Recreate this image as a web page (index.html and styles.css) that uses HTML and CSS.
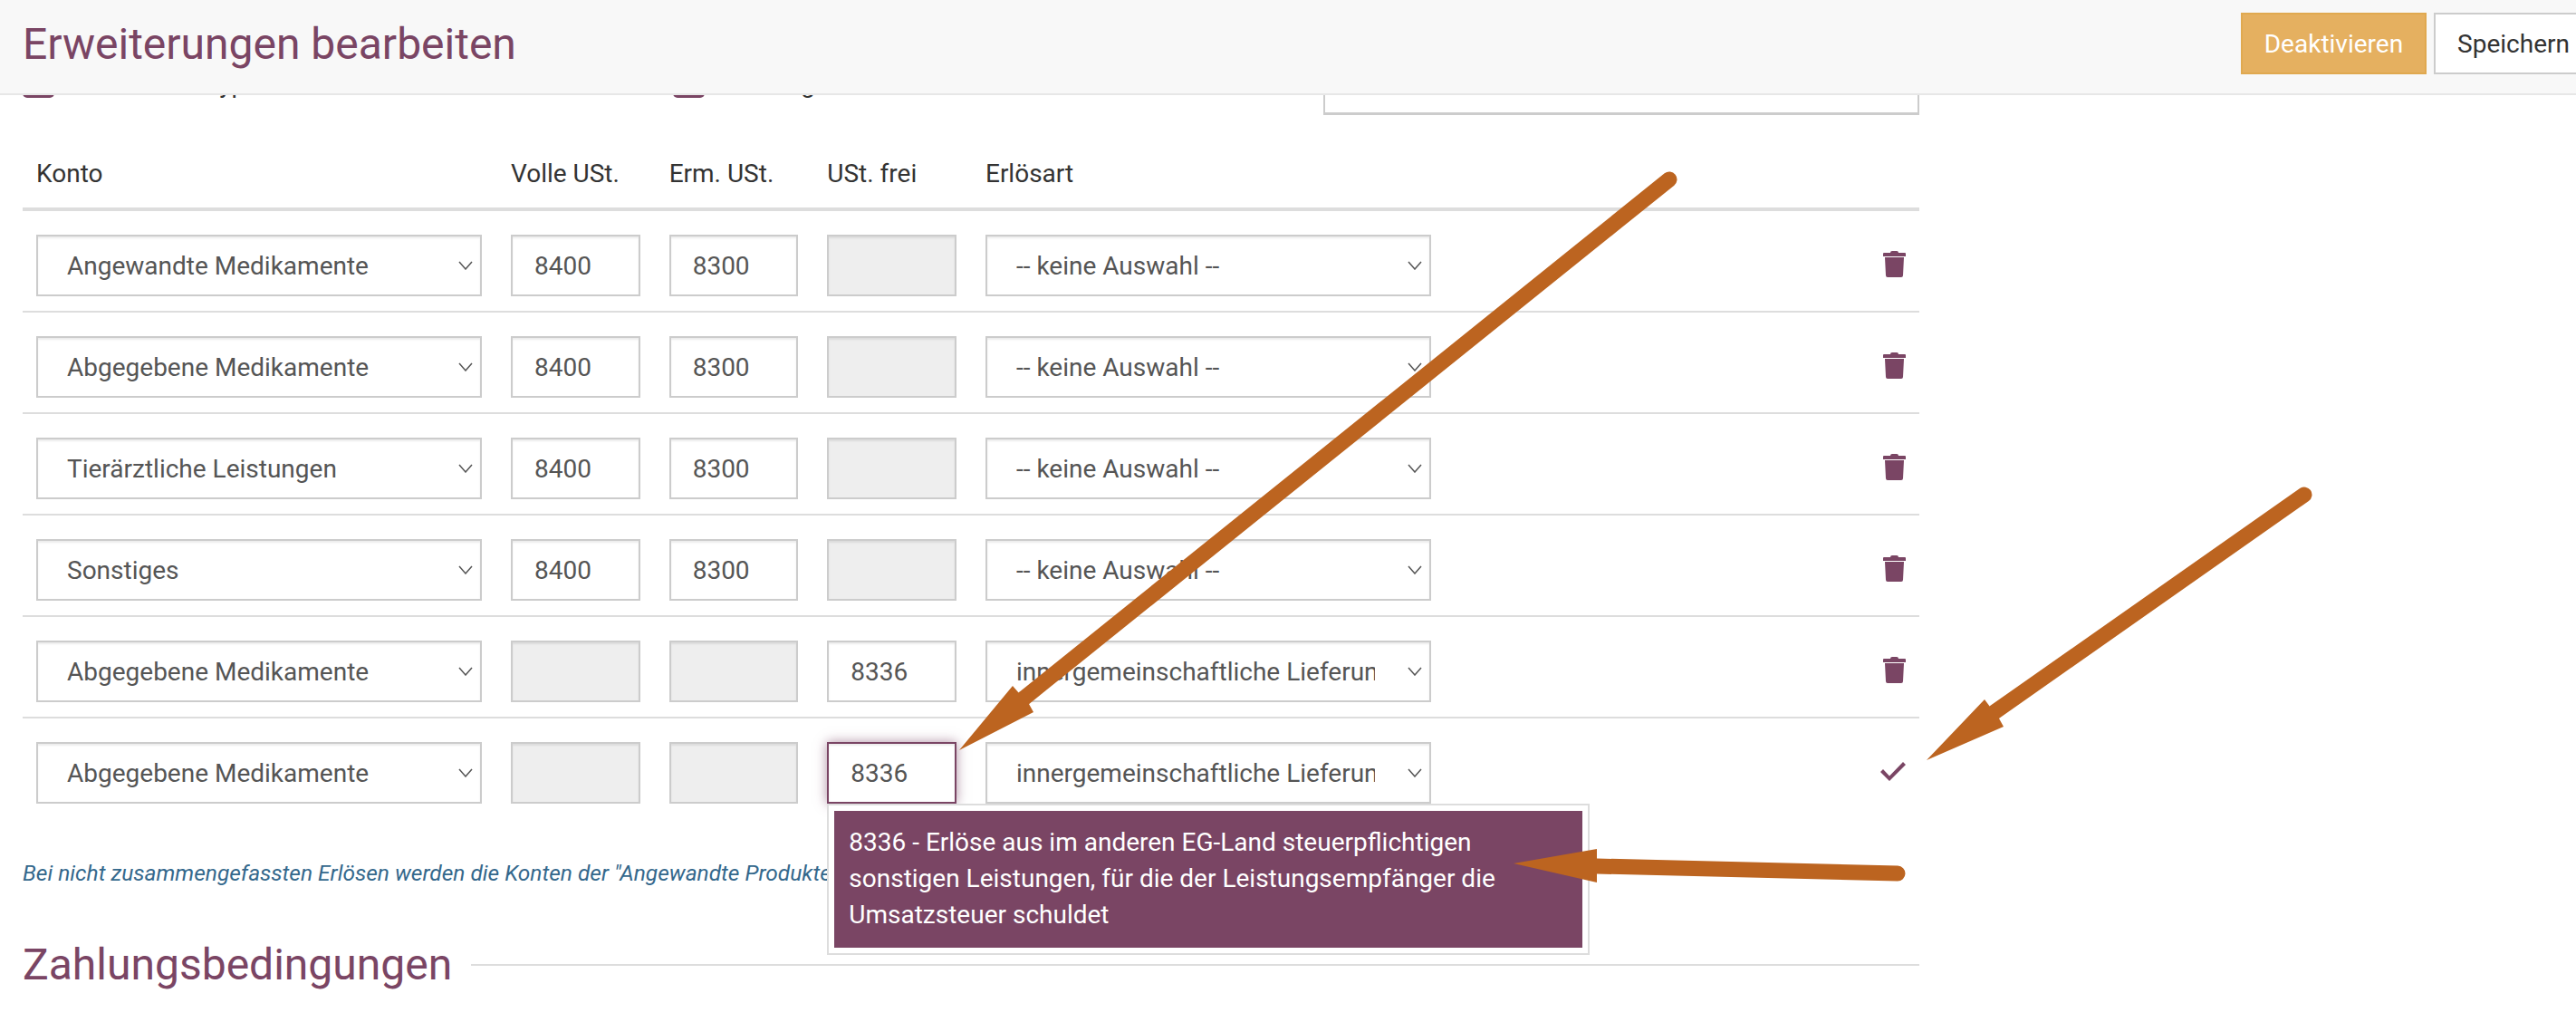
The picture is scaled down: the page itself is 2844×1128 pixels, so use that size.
FILE: index.html
```html
<!DOCTYPE html>
<html lang="de">
<head>
    <meta charset="UTF-8">
    <title>Erweiterungen bearbeiten</title>
    <link rel="stylesheet" href="styles.css">
</head>
<body>
<header class="topbar">
    <h1 class="page-title">Erweiterungen bearbeiten</h1>
    <div class="actions">
        <button class="btn btn-warning" type="button">Deaktivieren</button>
        <button class="btn" type="button">Speichern</button>
    </div>
</header>

<!-- what is left of the form after scrolling under the header -->
<div class="scrolled-off">
    <label class="check check-first"><span class="check-box"></span>Erlöse nach Typ</label>
    <label class="check check-second"><span class="check-box"></span>Leistung</label>
    <div class="scrolled-box"></div>
</div>

<main class="content">
    <div class="account-row account-head">
        <div>Konto</div>
        <div>Volle USt.</div>
        <div>Erm. USt.</div>
        <div>USt. frei</div>
        <div>Erlösart</div>
    </div>

    <div class="account-row">
        <select class="field"><option>Angewandte Medikamente</option></select>
        <input class="field" type="text" value="8400">
        <input class="field" type="text" value="8300">
        <input class="field" type="text" disabled>
        <select class="field"><option>-- keine Auswahl --</option></select>
        <svg class="row-icon" viewBox="0 0 25 29"><use href="#icon-trash"></use></svg>
    </div>
    <div class="account-row">
        <select class="field"><option>Abgegebene Medikamente</option></select>
        <input class="field" type="text" value="8400">
        <input class="field" type="text" value="8300">
        <input class="field" type="text" disabled>
        <select class="field"><option>-- keine Auswahl --</option></select>
        <svg class="row-icon" viewBox="0 0 25 29"><use href="#icon-trash"></use></svg>
    </div>
    <div class="account-row">
        <select class="field"><option>Tierärztliche Leistungen</option></select>
        <input class="field" type="text" value="8400">
        <input class="field" type="text" value="8300">
        <input class="field" type="text" disabled>
        <select class="field"><option>-- keine Auswahl --</option></select>
        <svg class="row-icon" viewBox="0 0 25 29"><use href="#icon-trash"></use></svg>
    </div>
    <div class="account-row">
        <select class="field"><option>Sonstiges</option></select>
        <input class="field" type="text" value="8400">
        <input class="field" type="text" value="8300">
        <input class="field" type="text" disabled>
        <select class="field"><option>-- keine Auswahl --</option></select>
        <svg class="row-icon" viewBox="0 0 25 29"><use href="#icon-trash"></use></svg>
    </div>
    <div class="account-row">
        <select class="field"><option>Abgegebene Medikamente</option></select>
        <input class="field" type="text" disabled>
        <input class="field" type="text" disabled>
        <input class="field" type="text" value="8336">
        <select class="field"><option>innergemeinschaftliche Lieferung</option></select>
        <svg class="row-icon" viewBox="0 0 25 29"><use href="#icon-trash"></use></svg>
    </div>
    <div class="account-row account-row-last">
        <select class="field"><option>Abgegebene Medikamente</option></select>
        <input class="field" type="text" disabled>
        <input class="field" type="text" disabled>
        <div class="tip-anchor">
            <input class="field field-focus" type="text" value="8336">
            <div class="tip">
                <div class="tip-inner">8336 - Erlöse aus im anderen EG-Land steuerpflichtigen sonstigen Leistungen, für die der Leistungsempfänger die Umsatzsteuer schuldet</div>
            </div>
        </div>
        <select class="field"><option>innergemeinschaftliche Lieferung</option></select>
        <svg class="row-icon row-icon-check" viewBox="0 0 28 21">
            <path d="M0 11 L3 8 L10 15.5 L25 0 L28 3 L10 21 Z"></path>
        </svg>
    </div>

    <p class="note">Bei nicht zusammengefassten Erlösen werden die Konten der "Angewandte Produkte" verwendet.</p>

    <h2 class="section-title">Zahlungsbedingungen</h2>
</main>

<!-- annotation arrows drawn over the screenshot -->
<svg class="arrows" viewBox="0 0 2844 1128">
    <path class="arrow-line" d="M1843 198 L1130 771"></path>
    <polygon class="arrow-head" points="1059,828 1118,757 1125,765 1136,777 1141,786"></polygon>
    <path class="arrow-line" d="M2544 546 L2202 786"></path>
    <polygon class="arrow-head" points="2127,839 2191,772 2197,780 2207,793 2212,802"></polygon>
    <path class="arrow-line" d="M2095 964 L1763 956"></path>
    <polygon class="arrow-head" points="1671,953 1763,937 1763,974"></polygon>
</svg>

<svg class="icon-defs" width="0" height="0">
    <symbol id="icon-trash" viewBox="0 0 25 29">
        <path d="M8 2 Q8 0 10 0 H15 Q17 0 17 2 H24 Q25 2 25 3 V6 H0 V3 Q0 2 1 2 Z"></path>
        <path d="M2 7 H23 L22 27 Q22 29 20 29 H5 Q3 29 3 27 Z"></path>
    </symbol>
</svg>
</body>
</html>
```

FILE: styles.css
```css
body {
    margin: 0;
    background-color: #fff;
    color: #333;
    font-family: Roboto, Arial, sans-serif;
    font-size: 28px;
    overflow: hidden;
    position: relative;
    height: 1128px;
}

/* top bar */
.topbar {
    display: flex;
    align-items: center;
    justify-content: space-between;
    height: 96px;
    padding: 0 0 7px 25px;
    background-color: #f8f8f8;
    border-bottom: 2px solid #e7e7e7;
    overflow: hidden;
}
.page-title {
    margin: 0;
    color: #7a4564;
    font-size: 48px;
    font-weight: 400;
}
.actions {
    display: flex;
    gap: 8px;
    margin-right: -19px;
}
.btn {
    height: 68px;
    padding: 0 24px;
    background-color: #fff;
    border: 2px solid #ccc;
    color: #333;
    font-family: inherit;
    font-size: 28px;
}
.btn-warning {
    background-color: #e5b060;
    border-color: #e0a950;
    color: #fff;
}

/* clipped form remains */
.scrolled-off {
    display: flex;
    align-items: flex-end;
    height: 22px;
    padding-left: 25px;
    overflow: hidden;
}
.check {
    display: flex;
    align-items: flex-end;
    gap: 15px;
    margin-bottom: 19px;
    line-height: 30px;
    color: #333;
    flex-shrink: 0;
}
.check-first {
    width: 718px;
}
.check-second {
    width: 718px;
}
.check-box {
    width: 35px;
    height: 35px;
    background-color: #7a4564;
    border-radius: 5px;
}
.scrolled-box {
    width: 654px;
    height: 60px;
    background-color: #fff;
    border: 2px solid #ccc;
    border-bottom-width: 3px;
    flex-shrink: 0;
}

/* account table */
.content {
    width: 2094px;
    margin-left: 25px;
}
.account-row {
    display: grid;
    grid-template-columns: 492px 142.67px 142.67px 142.67px 492px 1fr;
    column-gap: 32px;
    align-items: center;
    padding: 26px 15px 16px;
    border-bottom: 2px solid #ddd;
}
.account-head {
    height: 106px;
    box-sizing: border-box;
    padding: 50px 15px 0;
    align-items: start;
    border-bottom-width: 4px;
    line-height: 30px;
}
.account-row-last {
    border-bottom-color: transparent;
}
.field {
    display: block;
    width: 100%;
    height: 68px;
    box-sizing: border-box;
    padding: 0 24px;
    background-color: #fff;
    border: 2px solid #ccc;
    border-radius: 0;
    box-shadow: inset 0 2px 2px rgba(0, 0, 0, .075);
    color: #555;
    font-family: inherit;
    font-size: 28px;
    outline: none;
}
select.field {
    appearance: none;
    padding: 0 60px 0 32px;
    background-image: url("data:image/svg+xml,%3Csvg xmlns='http://www.w3.org/2000/svg' width='16' height='10'%3E%3Cpath d='M1 1 L8 9 L15 1' fill='none' stroke='%23555' stroke-width='1.5'/%3E%3C/svg%3E");
    background-repeat: no-repeat;
    background-position: right 8px center;
}
.field:disabled {
    background-color: #eee;
}
.field-focus {
    border-color: #7a4564;
    box-shadow: inset 0 2px 2px rgba(0, 0, 0, .075), 0 0 12px rgba(122, 69, 100, .6);
}
.row-icon {
    justify-self: end;
    width: 25px;
    height: 29px;
    margin-top: -4px;
    fill: #7a4564;
}
.row-icon-check {
    width: 28px;
    height: 21px;
}
.icon-defs {
    position: absolute;
}

/* tooltip under the focused input */
.tip-anchor {
    position: relative;
}
.tip {
    position: absolute;
    top: 68px;
    left: 0;
    z-index: 2;
    width: 842px;
    height: 167px;
    box-sizing: border-box;
    padding: 6px;
    background-color: #fff;
    border: 2px solid #ddd;
}
.tip-inner {
    height: 100%;
    box-sizing: border-box;
    padding: 15px 16px;
    background-color: #7a4564;
    color: #fff;
    line-height: 40px;
}

.note {
    margin: 44px 0 0;
    color: #34688c;
    font-size: 24.5px;
    font-style: italic;
    line-height: 30px;
}
.section-title {
    display: flex;
    align-items: center;
    gap: 21px;
    margin: 58px 0 0;
    color: #7a4564;
    font-size: 48px;
    font-weight: 400;
    line-height: 56px;
}
.section-title::after {
    content: "";
    flex: 1;
    border-top: 2px solid #ddd;
}

.arrows {
    position: absolute;
    top: 0;
    left: 0;
    z-index: 3;
    width: 2844px;
    height: 1128px;
    pointer-events: none;
}
.arrow-line {
    fill: none;
    stroke: #bc6420;
    stroke-width: 17;
    stroke-linecap: round;
}
.arrow-head {
    fill: #bc6420;
}
```
